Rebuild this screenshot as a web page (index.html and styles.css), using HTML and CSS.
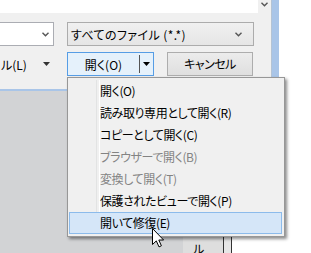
FILE: index.html
```html
<!DOCTYPE html>
<html lang="ja">
<head>
    <meta charset="UTF-8">
    <meta name="viewport" content="width=device-width, initial-scale=1.0">
    <title>開く</title>
    <link rel="stylesheet" href="styles.css">
</head>
<body>
    <div class="screen">
        <div class="upper">
            <div class="dialog">
                <div class="strip">
                    <div class="strip-field"></div>
                    <div class="strip-chev">
                        <svg width="7" height="5" viewBox="0 0 7 5"><path d="M0.5 0.8 L3.5 3.8 L6.5 0.8" fill="none" stroke="#555" stroke-width="1.4"/></svg>
                    </div>
                </div>
                <div class="row row-combos">
                    <div class="combo combo-name">
                        <span></span>
                        <svg width="7" height="5" viewBox="0 0 7 5"><path d="M0.5 0.8 L3.5 3.8 L6.5 0.8" fill="none" stroke="#555" stroke-width="1.4"/></svg>
                    </div>
                    <div class="combo combo-type">
                        <span class="combo-text">すべてのファイル (*.*)</span>
                        <svg width="7" height="5" viewBox="0 0 7 5"><path d="M0.5 0.8 L3.5 3.8 L6.5 0.8" fill="none" stroke="#555" stroke-width="1.4"/></svg>
                    </div>
                </div>
                <div class="row row-buttons">
                    <div class="tools">
                        <span>ル(L)</span>
                        <svg width="7" height="4" viewBox="0 0 7 4"><path d="M0 0 H7 L3.5 4 Z" fill="#333"/></svg>
                    </div>
                    <div class="split-btn">
                        <span class="split-label">開く(O)</span>
                        <span class="split-div"></span>
                        <span class="split-arrow">
                            <svg width="7" height="4" viewBox="0 0 7 4"><path d="M0 0 H7 L3.5 4 Z" fill="#000"/></svg>
                        </span>
                    </div>
                    <div class="btn">キャンセル</div>
                </div>
            </div>
            <div class="frame-right"></div>
            <div class="blank"></div>
        </div>
        <div class="lower">
            <div class="desk"></div>
            <div class="back-btn">ル</div>
            <div class="edge"></div>
            <div class="blank"></div>
        </div>

        <ul class="menu">
            <li>開く(O)</li>
            <li>読み取り専用として開く(R)</li>
            <li>コピーとして開く(C)</li>
            <li class="disabled">ブラウザーで開く(B)</li>
            <li class="disabled">変換して開く(T)</li>
            <li>保護されたビューで開く(P)</li>
            <li class="hover">開いて修復(E)</li>
        </ul>

        <svg class="cursor" width="13" height="20" viewBox="0 0 13 20">
            <path d="M0.5 0.5 L0.5 16.5 L4.3 12.9 L7 18.9 L9.4 17.8 L6.8 12 L11.6 12 Z" fill="#fff" stroke="#000" stroke-width="1" stroke-linejoin="miter"/>
        </svg>
    </div>
</body>
</html>
```

FILE: styles.css
```css
* {
    box-sizing: border-box;
}
body {
    margin: 0;
    width: 311px;
    height: 253px;
    overflow: hidden;
    background-color: #fff;
    font-family: "Noto Sans CJK JP", "Noto Sans", sans-serif;
    font-size: 12px;
    font-feature-settings: "palt";
    color: #000;
}
.screen {
    position: relative;
    width: 311px;
    height: 253px;
}
.upper {
    display: flex;
    height: 91px;
}
.dialog {
    width: 271px;
    background-color: #f0f0f0;
    border-bottom: 2px solid #a9c5e8;
    display: flex;
    flex-direction: column;
}
.frame-right {
    width: 8px;
    background-color: #a9c5e8;
    border-left: 1px solid #b4c3d4;
}
.blank {
    flex: 1;
    background-color: #fff;
}
.strip {
    display: flex;
    height: 13px;
}
.strip-field {
    width: 258px;
    background-color: #fff;
}
.strip-chev {
    flex: 1;
    display: flex;
    justify-content: center;
    padding-top: 2px;
}
.row {
    display: flex;
    align-items: center;
    height: 24px;
}
.row-combos {
    margin-top: 9px;
}
.row-buttons {
    margin-top: 6px;
}
.combo {
    height: 24px;
    border: 1px solid #acacac;
    display: flex;
    align-items: center;
    justify-content: space-between;
}
.combo-name {
    margin-left: -3px;
    width: 57px;
    background-color: #fff;
    border-color: #abadb3;
    padding-right: 4px;
}
.combo-type {
    margin-left: 13px;
    width: 187px;
    background: linear-gradient(#f0f0f0, #e5e5e5);
    padding: 0 11px 0 3px;
}
.combo-text {
    letter-spacing: 0.4px;
}
.tools {
    width: 67px;
    display: flex;
    align-items: center;
    justify-content: space-between;
    padding: 0 17px 0 1px;
}
.split-btn {
    width: 87px;
    height: 24px;
    border: 1px solid #569de5;
    background-color: #e5f1fb;
    display: flex;
    align-items: center;
}
.split-label {
    width: 71px;
    text-align: center;
}
.split-div {
    width: 1px;
    height: 18px;
    background-color: #555;
}
.split-arrow {
    flex: 1;
    display: flex;
    justify-content: center;
}
.btn {
    margin-left: 13px;
    width: 86px;
    height: 24px;
    border: 1px solid #adadad;
    background: linear-gradient(#ececec, #dfdfdf);
    text-align: center;
    line-height: 22px;
    letter-spacing: -0.5px;
}
.lower {
    display: flex;
    height: 162px;
}
.desk {
    width: 183px;
    background-color: #d2d3d5;
}
.back-btn {
    width: 40px;
    background-color: #dedede;
    padding: 150px 0 0 10px;
    line-height: 16px;
}
.edge {
    width: 9px;
    border-left: 1px solid #333;
    border-right: 1px solid #333;
    background-color: #e6e6e6;
}
.menu {
    position: absolute;
    left: 67px;
    top: 77px;
    width: 218px;
    margin: 0;
    padding: 2px 2px 2px 1px;
    list-style: none;
    background-color: #f0f0f0;
    border: 1px solid #979797;
    box-shadow: 2px 2px 3px rgba(0, 0, 0, 0.45);
}
.menu::before {
    content: "";
    position: absolute;
    left: 28px;
    top: 2px;
    bottom: 2px;
    width: 2px;
    border-left: 1px solid #e2e3e3;
    border-right: 1px solid #fff;
}
.menu li {
    position: relative;
    height: 22px;
    line-height: 22px;
    padding-left: 31px;
    white-space: nowrap;
    letter-spacing: -0.4px;
}
.menu li.disabled {
    color: #838383;
}
.menu li.hover {
    background-color: #d5e6f8;
    border: 1px solid #8cbbeb;
    padding-left: 30px;
    line-height: 20px;
}
.cursor {
    position: absolute;
    left: 152px;
    top: 228px;
}
```
